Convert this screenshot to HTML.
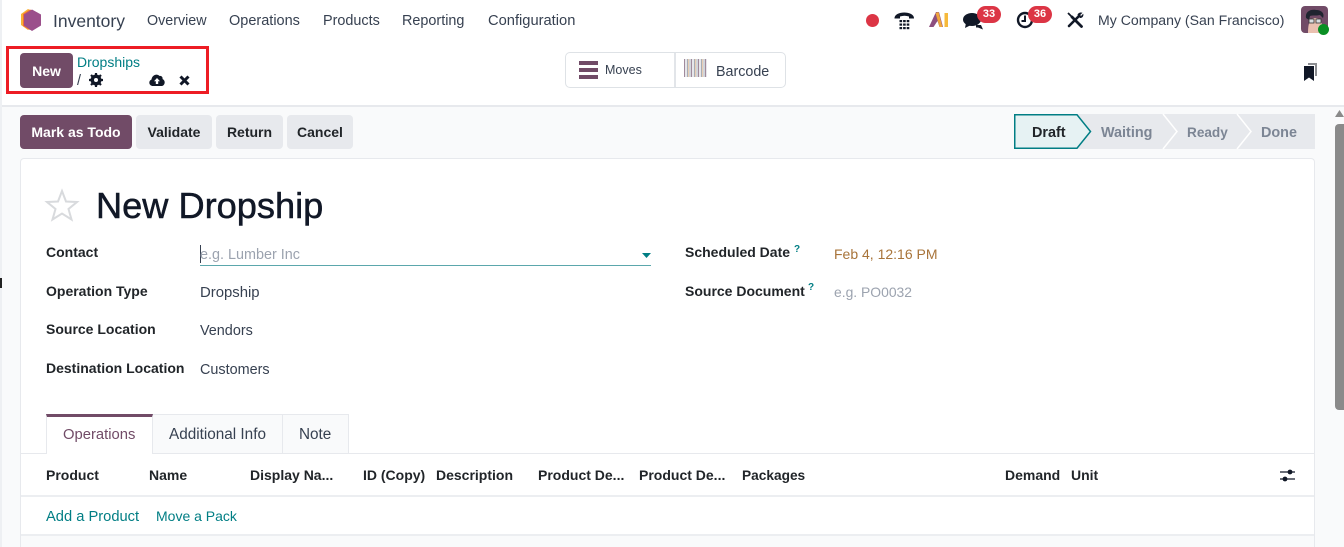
<!DOCTYPE html>
<html><head><meta charset="utf-8"><title>Inventory</title>
<style>
html,body{margin:0;padding:0;width:1344px;height:547px;overflow:hidden}
body{position:relative;background:#f9fafb;font-family:"Liberation Sans",sans-serif;color:#374151;font-size:14px}
#w{position:absolute;left:0;top:0;width:1344px;height:547px;overflow:hidden}
.t{position:absolute;white-space:nowrap;line-height:20px}
.b{position:absolute;box-sizing:border-box}
svg{position:absolute;overflow:visible}
.lb{font-weight:bold;color:#212529;font-size:14px}
.h{font-weight:bold;color:#212529;font-size:14px}
</style></head><body><div id="w">
<div class="b" style="left:0;top:0;width:1344px;height:105px;background:#fff"></div>
<div class="b" style="left:0;top:105px;width:1344px;height:2px;background:#e7e9ed"></div>
<div class="b" style="left:0;top:0;width:2px;height:547px;background:#eef0f3"></div>

<!-- logo -->
<svg style="left:19px;top:8px" width="24" height="24" viewBox="0 0 24 24">
<path d="M9 1 L17 5 V17 L9 22 L2 17 V6Z" fill="#f9b233"/>
<path d="M11 1.500 L19 5 V17 L11 22 L4 18 V6Z" fill="#ee6c3a"/>
<path d="M13 1.500 L22 6.500 V17.500 L13 23 L5 17.500 V6.500Z" fill="#9b4f8b"/>
</svg>
<div class="t" style="left:53px;top:11px;font-size:17.500px">Inventory</div>
<div class="t" style="left:147px;top:11px;font-size:14.300px">Overview</div>
<div class="t" style="left:229px;top:11px;font-size:14.500px">Operations</div>
<div class="t" style="left:323px;top:11px;font-size:14.400px">Products</div>
<div class="t" style="left:402px;top:11px;font-size:14.400px">Reporting</div>
<div class="t" style="left:488px;top:11px;font-size:14.700px">Configuration</div>

<!-- systray -->
<div class="b" style="left:866px;top:14px;width:13px;height:13px;border-radius:50%;background:#dc3545"></div>
<svg style="left:894px;top:10px" width="22" height="20" viewBox="0 0 22 20">
<path d="M0.500 8.500 C0 0.500 20.500 0.500 20 8.500 L15 8.500 L15 6.500 C12 5.500 9 5.500 6 6.500 L6 8.500Z" fill="#111827"/>
<g fill="#111827"><rect x="5.500" y="10" width="2.600" height="2.200"/><rect x="9.100" y="10" width="2.600" height="2.200"/><rect x="12.700" y="10" width="2.600" height="2.200"/><rect x="5.500" y="13.500" width="2.600" height="2.200"/><rect x="9.100" y="13.500" width="2.600" height="2.200"/><rect x="12.700" y="13.500" width="2.600" height="2.200"/><rect x="5.500" y="17" width="2.600" height="2.200"/><rect x="9.100" y="17" width="2.600" height="2.200"/><rect x="12.700" y="17" width="2.600" height="2.200"/></g>
</svg>
<svg style="left:929px;top:12px" width="20" height="16" viewBox="0 0 20 16">
<path d="M0 15 L7 0 L10 0 L14 15 L10.500 15 L8.500 9 L4.500 15Z" fill="#8d4f7f"/>
<path d="M6.500 1 L9.500 0 L13.500 15 L10.500 15Z" fill="#f0a63c"/>
<rect x="15.500" y="1" width="3.500" height="14" fill="#f6b93b"/>
</svg>
<svg style="left:963px;top:12px" width="22" height="18" viewBox="0 0 22 18">
<ellipse cx="9" cy="7.500" rx="9" ry="6.500" fill="#111827"/>
<path d="M3 11 L2 16 L8 13Z" fill="#111827"/>
<path d="M13 13 H18 L20 17.500 L15 15.500 H13Z" fill="#111827"/>
</svg>
<div class="b" style="left:977px;top:6px;width:24px;height:17px;border-radius:9px;background:#dc3545;color:#fff;font-size:11px;font-weight:bold;line-height:17px;text-align:center">33</div>
<svg style="left:1016px;top:11px" width="20" height="18" viewBox="0 0 20 18">
<circle cx="9" cy="9" r="7" fill="none" stroke="#111827" stroke-width="2.400"/>
<path d="M9 4.500 V10 H5.500" fill="none" stroke="#111827" stroke-width="2"/>
</svg>
<div class="b" style="left:1028px;top:6px;width:24px;height:17px;border-radius:9px;background:#dc3545;color:#fff;font-size:11px;font-weight:bold;line-height:17px;text-align:center">36</div>
<svg style="left:1067px;top:12px" width="17" height="16" viewBox="0 0 17 16">
<path d="M5 5 L14.500 14.500" stroke="#111827" stroke-width="2.800" stroke-linecap="round"/>
<path d="M1 1 L6 6" stroke="#111827" stroke-width="1.800"/>
<path d="M12 4 L2 14" stroke="#111827" stroke-width="2.600" stroke-linecap="round"/>
<path d="M10.500 3 C11 0.500 14 0 15.500 0.800 L13.200 3 L14 4 L16.200 1.800 C17 3.500 15.500 6.500 13 6Z" fill="#111827"/>
</svg>
<div class="t" style="left:1098px;top:10px;font-size:14.100px">My Company (San Francisco)</div>
<svg style="left:1301px;top:6px" width="30" height="30" viewBox="0 0 30 30">
<rect x="0" y="0" width="27" height="27" rx="4" fill="#714b67"/>
<path d="M7 27 C7 20 8 12 14 12 C21 12 22 20 22 27Z" fill="#eac0b0"/>
<path d="M5 12 C4 6 9 3 15 4 C20 4 24 7 22 12 L19 9 C15 10 11 9 9 10 L8 14Z" fill="#1f2430"/>
<rect x="8" y="13" width="5" height="4" fill="#d9dde0" stroke="#333" stroke-width=".8"/>
<rect x="15" y="13" width="5" height="4" fill="#d9dde0" stroke="#333" stroke-width=".8"/>
<circle cx="22.500" cy="23.500" r="5.500" fill="#0a8f24"/>
</svg>

<!-- control panel -->
<div class="b" style="left:6px;top:46px;width:203px;height:48px;border:3px solid #ed1c24"></div>
<div class="b" style="left:20px;top:53px;width:53px;height:35px;background:#714b67;border-radius:4px;color:#fff;font-weight:bold;font-size:14px;line-height:36px;text-align:center">New</div>
<div class="t" style="left:77px;top:52px;color:#017e84;font-size:14px">Dropships</div>
<div class="t" style="left:77px;top:71px;font-size:14.400px;color:#374151">/</div>
<svg style="left:89px;top:73px" width="14" height="14" viewBox="0 0 14 14">
<circle cx="7" cy="7" r="4" fill="none" stroke="#111827" stroke-width="3"/>
<path d="M7 0 V14 M0 7 H14 M2 2 L12 12 M12 2 L2 12" stroke="#111827" stroke-width="2.200"/>
<circle cx="7" cy="7" r="2" fill="#fff"/>
</svg>
<svg style="left:149px;top:73px" width="16" height="13" viewBox="0 0 16 13">
<path d="M4 13 C0 13 -1 8 2.500 6.500 C3 2 8 0 10.500 3 C13 2.500 14 5 13.500 6 C17 7.500 16 13 12.500 13Z" fill="#111827"/>
<path d="M8 5 L11 8.200 H9.200 V11 H6.800 V8.200 H5Z" fill="#fff"/>
</svg>
<svg style="left:179px;top:75px" width="11" height="11" viewBox="0 0 11 11"><path d="M1.500 1.500 L9.500 9.500 M9.500 1.500 L1.500 9.500" stroke="#111827" stroke-width="3"/></svg>

<!-- Moves / Barcode -->
<div class="b" style="left:565px;top:52px;width:221px;height:36px;border:1px solid #dee2e6;border-radius:5px;background:#fff"></div>
<div class="b" style="left:674px;top:53px;width:2px;height:34px;background:#e2e5e9"></div>
<div class="b" style="left:579px;top:61px;width:19px;height:4px;background:#714b67"></div>
<div class="b" style="left:579px;top:68px;width:19px;height:4px;background:#714b67"></div>
<div class="b" style="left:579px;top:75px;width:19px;height:3.500px;background:#714b67"></div>
<div class="t" style="left:605px;top:60px;font-size:12.500px">Moves</div>
<div class="b" style="left:684px;top:59px;width:23px;height:18px;background:repeating-linear-gradient(90deg,#a08a9c 0 1px,#e6e6ea 1px 3px,#a8adb5 3px 4px,#e8cdb3 4px 5px,#d2d5da 5px 7px)"></div>
<div class="t" style="left:716px;top:62px;font-size:14.300px">Barcode</div>
<svg style="left:1303px;top:62px" width="15" height="20" viewBox="0 0 15 20">
<path d="M5 1 H14 V14 H12 V3 H5Z" fill="#8b8d91"/>
<path d="M1 4 H11 V19 L6 15.500 L1 19Z" fill="#111827"/>
</svg>

<!-- action buttons -->
<div class="b h" style="left:20px;top:115px;width:112px;height:34px;background:#714b67;border-radius:4px;color:#fff;line-height:35px;text-align:center">Mark as Todo</div>
<div class="b h" style="left:136px;top:115px;width:76px;height:34px;background:#e7e9ed;border-radius:4px;line-height:35px;text-align:center">Validate</div>
<div class="b h" style="left:216px;top:115px;width:67px;height:34px;background:#e7e9ed;border-radius:4px;line-height:35px;text-align:center">Return</div>
<div class="b h" style="left:287px;top:115px;width:66px;height:34px;background:#e7e9ed;border-radius:4px;line-height:35px;text-align:center">Cancel</div>

<!-- status bar -->
<svg style="left:1014px;top:114px" width="301" height="35" viewBox="0 0 301 35">
<rect x="60" y="0" width="241" height="35" fill="#e7e9ed"/>
<path d="M149 0 L163 17.500 L149 35" fill="none" stroke="#fff" stroke-width="1.500"/>
<path d="M223 0 L237 17.500 L223 35" fill="none" stroke="#fff" stroke-width="1.500"/>
<path d="M.75 .75 H63 L76.500 17.500 L63 34.250 H.75Z" fill="#e6f2f3" stroke="#017e84" stroke-width="1.500"/>
</svg>
<div class="t h" style="left:1032px;top:123px;font-size:14.400px">Draft</div>
<div class="t" style="left:1101px;top:123px;font-size:14.400px;font-weight:bold;color:#7c8594">Waiting</div>
<div class="t" style="left:1187px;top:123px;font-size:13.600px;font-weight:bold;color:#7c8594">Ready</div>
<div class="t" style="left:1261px;top:123px;font-size:14.400px;font-weight:bold;color:#7c8594">Done</div>

<!-- scrollbar -->
<svg style="left:1335px;top:108px" width="9" height="10"><path d="M0 9 L4.500 2 L9 9Z" fill="#8a8a8a"/></svg>
<div class="b" style="left:1335px;top:124px;width:9px;height:286px;background:#8a8a8a;border-radius:4px 0 0 4px"></div>

<!-- sheet -->
<div class="b" style="left:20px;top:158px;width:1295px;height:389px;background:#fff;border:1px solid #e7e9ed;border-bottom:0;border-radius:4px 4px 0 0"></div>
<svg style="left:45px;top:189px" width="34" height="32" viewBox="0 0 34 32"><path d="M17 2 L21 12.500 L32 13 L23.500 20 L26.500 30.500 L17 24.500 L7.500 30.500 L10.500 20 L2 13 L13 12.500Z" fill="none" stroke="#d8dadd" stroke-width="2"/></svg>
<div class="t" style="left:96px;top:186px;font-size:36.200px;line-height:40px;color:#111827;-webkit-text-stroke:.5px #111827">New Dropship</div>

<div class="t lb" style="left:46px;top:242px">Contact</div>
<div class="t lb" style="left:46px;top:281px">Operation Type</div>
<div class="t lb" style="left:46px;top:319px">Source Location</div>
<div class="t lb" style="left:46px;top:358px">Destination Location</div>

<div class="b" style="left:200px;top:245px;width:1px;height:18px;background:#374151"></div>
<div class="t" style="left:200px;top:245px;font-size:14.400px;color:#9ca3af">e.g. Lumber Inc</div>
<div class="b" style="left:200px;top:265px;width:451px;height:1px;background:#5ba7ac"></div>
<svg style="left:642px;top:253px" width="10" height="6"><path d="M0 0 H9 L4.500 5Z" fill="#017e84"/></svg>
<div class="t" style="left:200px;top:283px;font-size:14.900px">Dropship</div>
<div class="t" style="left:200px;top:321px;font-size:14.400px">Vendors</div>
<div class="t" style="left:200px;top:360px;font-size:14.400px">Customers</div>

<div class="t lb" style="left:685px;top:242px">Scheduled Date</div>
<div class="t" style="left:794px;top:240px;font-size:10px;font-weight:bold;color:#017e84">?</div>
<div class="t lb" style="left:685px;top:281px">Source Document</div>
<div class="t" style="left:808px;top:278px;font-size:10px;font-weight:bold;color:#017e84">?</div>
<div class="t" style="left:834px;top:244px;font-size:14px;color:#a8743a">Feb 4, 12:16 PM</div>
<div class="t" style="left:834px;top:282px;font-size:13.900px;color:#9ca3af">e.g. PO0032</div>

<!-- tabs -->
<div class="b" style="left:20px;top:453px;width:1295px;height:1px;background:#e7e9ed"></div>
<div class="b" style="left:46px;top:414px;width:107px;height:40px;background:#fff;border:1px solid #e7e9ed;border-bottom:0;border-top:3px solid #714b67"></div>
<div class="b" style="left:153px;top:414px;width:130px;height:39px;background:#f9fafb;border-top:1px solid #e7e9ed;border-right:1px solid #e7e9ed"></div>
<div class="b" style="left:283px;top:414px;width:66px;height:39px;background:#f9fafb;border-top:1px solid #e7e9ed;border-right:1px solid #e7e9ed"></div>
<div class="t" style="left:63px;top:425px;font-size:14.800px;color:#714b67">Operations</div>
<div class="t" style="left:169px;top:425px;font-size:15.300px">Additional Info</div>
<div class="t" style="left:299px;top:425px;font-size:15.300px">Note</div>

<!-- table head -->
<div class="t lb" style="left:46px;top:465px">Product</div>
<div class="t lb" style="left:149px;top:465px">Name</div>
<div class="t lb" style="left:250px;top:465px">Display Na...</div>
<div class="t lb" style="left:363px;top:465px">ID (Copy)</div>
<div class="t lb" style="left:436px;top:465px">Description</div>
<div class="t lb" style="left:538px;top:465px">Product De...</div>
<div class="t lb" style="left:639px;top:465px">Product De...</div>
<div class="t lb" style="left:742px;top:466px;font-size:13.700px">Packages</div>
<div class="t lb" style="left:1005px;top:465px">Demand</div>
<div class="t lb" style="left:1071px;top:465px">Unit</div>
<svg style="left:1280px;top:469px" width="15" height="13" viewBox="0 0 15 13">
<path d="M0 3 H15 M0 10 H15" stroke="#111827" stroke-width="1.200"/>
<circle cx="10" cy="3" r="2.400" fill="#111827"/><circle cx="5" cy="10" r="2.400" fill="#111827"/>
</svg>
<div class="b" style="left:21px;top:495px;width:1293px;height:2px;background:#eceef1"></div>
<div class="t" style="left:46px;top:507px;font-size:14.700px;color:#017e84">Add a Product</div>
<div class="t" style="left:156px;top:506px;font-size:14px;color:#017e84">Move a Pack</div>
<div class="b" style="left:21px;top:534px;width:1293px;height:2px;background:#eceef1"></div>
<div class="b" style="left:21px;top:536px;width:1293px;height:11px;background:#f9fafb"></div>
<div class="b" style="left:0;top:278px;width:2px;height:10px;background:#222"></div>
</div></body></html>
